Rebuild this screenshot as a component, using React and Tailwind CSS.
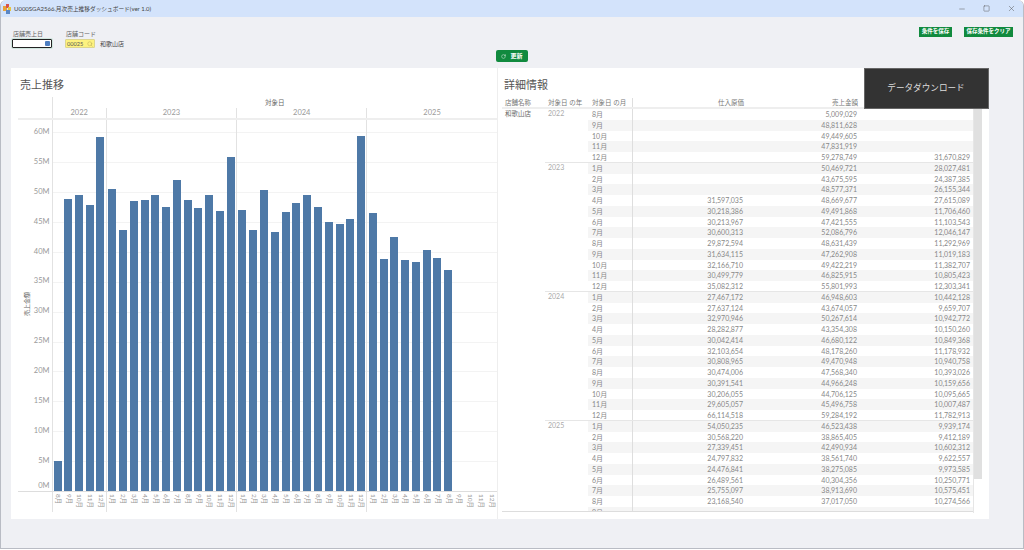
import { Minus, RotateCw, Search, Square, X } from "lucide-react";

const MONTH_HEIGHT = 5.98; // px per 1M on the chart

const years = [
  {
    year: "2022",
    months: [8, 9, 10, 11, 12],
    cost: ["", "", "", "", ""],
    sales: ["5,009,029", "48,811,628", "49,449,605", "47,831,919", "59,278,749"],
    third: ["", "", "", "", "31,670,829"],
  },
  {
    year: "2023",
    months: [1, 2, 3, 4, 5, 6, 7, 8, 9, 10, 11, 12],
    cost: ["", "", "", "31,597,035", "30,218,386", "30,213,967", "30,600,313", "29,872,594", "31,634,115", "32,166,710", "30,499,779", "35,082,312"],
    sales: ["50,469,721", "43,675,595", "48,577,371", "48,669,677", "49,491,868", "47,421,555", "52,086,796", "48,631,439", "47,262,908", "49,422,219", "46,825,915", "55,801,993"],
    third: ["28,027,481", "24,387,385", "26,155,344", "27,615,089", "11,706,460", "11,103,543", "12,046,147", "11,292,969", "11,019,183", "11,382,707", "10,805,423", "12,303,341"],
  },
  {
    year: "2024",
    months: [1, 2, 3, 4, 5, 6, 7, 8, 9, 10, 11, 12],
    cost: ["27,467,172", "27,637,124", "32,970,946", "28,282,877", "30,042,414", "32,103,654", "30,808,965", "30,474,006", "30,391,541", "30,206,055", "29,605,057", "66,114,518"],
    sales: ["46,948,603", "43,674,057", "50,267,614", "43,354,308", "46,680,122", "48,178,260", "49,470,948", "47,568,340", "44,966,248", "44,706,125", "45,496,758", "59,284,192"],
    third: ["10,442,128", "9,659,707", "10,942,772", "10,150,260", "10,849,368", "11,178,932", "10,940,758", "10,393,026", "10,159,656", "10,095,665", "10,007,487", "11,782,913"],
  },
  {
    year: "2025",
    months: [1, 2, 3, 4, 5, 6, 7, 8, 9, 10, 11, 12],
    cost: ["54,050,235", "30,568,220", "27,339,451", "24,797,832", "24,476,841", "26,489,561", "25,755,097", "23,168,540", "", "", "", ""],
    sales: ["46,523,438", "38,865,405", "42,490,934", "38,561,740", "38,275,085", "40,304,356", "38,913,690", "37,017,050", "", "", "", ""],
    third: ["9,939,174", "9,412,189", "10,602,312", "9,622,557", "9,973,585", "10,250,771", "10,575,451", "10,274,566", "", "", "", ""],
  },
];

const ticks = ["60M", "55M", "50M", "45M", "40M", "35M", "30M", "25M", "20M", "15M", "10M", "5M"];

const yearWidth = { 5: "w-[54.3px]", 12: "w-[130.3px]" };

function AppIcon() {
  return (
    <svg width="9" height="10" viewBox="0 0 9 10" className="shrink-0">
      <rect x="0" y="2" width="4" height="5" fill="#e8a23a" />
      <rect x="3" y="0" width="3" height="4" fill="#d9534a" />
      <rect x="5" y="3" width="3" height="4" fill="#e6c53f" />
      <rect x="3" y="6" width="4" height="4" fill="#5b86c4" />
    </svg>
  );
}

function TitleBar() {
  return (
    <div className="h-[17px] shrink-0 bg-[#d3e3fb] flex items-center pl-[2px] rounded-t-[6px]">
      <AppIcon />
      <span className="ml-[2px] text-[#444] text-[6px]">
        U000SGA2566.<span className="text-[5.7px]">月次売上推移ダッシュボード</span>(ver 1.0)
      </span>
      <div className="ml-auto flex items-center text-[#555]">
        <Minus size={8} strokeWidth={1.5} className="mr-[17px]" />
        <Square size={7} strokeWidth={1.6} className="mr-[17px]" />
        <X size={9} strokeWidth={1.3} className="mr-[7px]" />
      </div>
    </div>
  );
}

function Filters() {
  return (
    <div className="h-[51px] shrink-0 flex flex-col">
      <div className="h-[33px] flex justify-between">
        <div className="flex pl-[11px] pt-[12px]">
          <div className="w-[53px]">
            <div className="pl-[1px] h-[10px] leading-[9px] text-[6px] text-[#666]">店舗売上日</div>
            <div className="w-[40px] h-[9px] bg-white border-[1.5px] border-[#222] rounded-[1px] flex items-center justify-end pr-[1px] shadow-[0_0_0_1px_#cfe6de]">
              <span className="w-[5px] h-[5px] bg-[#4e7fc0] rounded-[1px]" />
            </div>
          </div>
          <div>
            <div className="pl-[1px] h-[10px] leading-[9px] text-[6px] text-[#666]">店舗コード</div>
            <div className="flex items-center">
              <div className="w-[30px] h-[9px] bg-[#fdf27f] border border-[#dcd68f] rounded-[1px] flex items-center justify-between pl-[1px] pr-[1px]">
                <span className="text-[5.6px] leading-none text-[#555]">00025</span>
                <Search size={6} strokeWidth={1.5} className="text-[#a89a50]" />
              </div>
              <span className="ml-[5px] text-[6px] leading-none text-[#444]">和歌山店</span>
            </div>
          </div>
        </div>
        <div className="flex pt-[10px] pr-[10px] gap-[12px]">
          <button className="w-[33px] h-[10px] bg-[#118a3e] text-white text-[5.5px] leading-none font-bold">条件を保存</button>
          <button className="w-[49px] h-[10px] bg-[#118a3e] text-white text-[5.5px] leading-none font-bold">保存条件をクリア</button>
        </div>
      </div>
      <div className="flex justify-center">
        <button className="w-[32px] h-[12px] bg-[#118a3e] rounded-[2px] text-white flex items-center justify-center gap-[4px]">
          <RotateCw size={5} strokeWidth={2} />
          <span className="text-[6px] leading-none font-bold">更新</span>
        </button>
      </div>
    </div>
  );
}

function YAxis() {
  return (
    <div className="w-[33.5px] shrink-0 flex flex-col">
      <div className="h-[23px] shrink-0 border-b-2 border-[#eeeeee]" />
      <div className="h-[371px] relative pt-[7px] pr-[2px] text-right text-[7.5px] text-[#999]">
        {ticks.map((t) => (
          <div key={t} className="h-[29.9px] leading-[10px]">{t}</div>
        ))}
        <div className="-mt-[5px] leading-[10px]">0M</div>
        <span className="absolute left-[6px] top-[172px] [writing-mode:vertical-rl] [text-orientation:sideways] rotate-180 text-[6px] leading-none text-[#666]">売上金額</span>
      </div>
      <div className="border-t border-[#dddddd]" />
    </div>
  );
}

function Bars({ group }) {
  return (
    <div className={`${yearWidth[group.months.length]} shrink-0 h-full flex items-end border-l border-[#e2e2e2]`}>
      {group.months.map((m, i) => {
        const value = group.sales[i] ? Number(group.sales[i].replaceAll(",", "")) / 1000000 : 0;
        return (
          <div key={m} className="flex-1 flex justify-center">
            <div className="w-[8px] bg-[#4e79a7]" style={{ height: value * MONTH_HEIGHT }} />
          </div>
        );
      })}
    </div>
  );
}

function Chart() {
  return (
    <div className="w-[486px] shrink-0 pl-[7px] flex flex-col">
      <h2 className="h-[29px] shrink-0 pl-[2px] pt-[9px] text-[11px] leading-[16px] text-[#555]">売上推移</h2>
      <div className="flex">
        <YAxis />
        <div className="w-[445.5px] flex flex-col">
          <div className="h-[11px] leading-[12px] border-l border-[#e2e2e2] text-center text-[6.5px] text-[#666]">対象日</div>
          <div className="h-[12px] flex border-b-2 border-[#eeeeee]">
            {years.map((g) => (
              <div key={g.year} className={`${yearWidth[g.months.length]} shrink-0 border-l border-[#e2e2e2] text-center text-[7.5px] leading-[10px] text-[#999]`}>
                {g.year}
              </div>
            ))}
          </div>
          <div className="h-[371px] grid">
            <div className="col-start-1 row-start-1 pt-[12.3px]">
              {ticks.map((t) => (
                <div key={t} className="h-[29.9px] border-t border-[#f3f3f3]" />
              ))}
            </div>
            <div className="col-start-1 row-start-1 flex">
              {years.map((g) => (
                <Bars key={g.year} group={g} />
              ))}
            </div>
          </div>
          <div className="h-[21px] flex border-t border-[#dddddd]">
            {years.map((g) => (
              <div key={g.year} className={`${yearWidth[g.months.length]} shrink-0 flex border-l border-[#e2e2e2]`}>
                {g.months.map((m) => (
                  <div key={m} className="flex-1 flex justify-center pt-[2px]">
                    <span className="[writing-mode:vertical-rl] [text-orientation:sideways] text-[6.5px] leading-none text-[#999]">{m}月</span>
                  </div>
                ))}
              </div>
            ))}
          </div>
        </div>
      </div>
    </div>
  );
}

function TableRow({ group, index, rowIndex }) {
  const striped = rowIndex % 2 === 1;
  const last = index === group.months.length - 1;
  return (
    <div className={`h-[10.75px] flex leading-[11px] ${striped ? "bg-[#f5f5f5]" : "bg-white"} ${last ? "border-b border-[#e6e6e6]" : ""}`}>
      <div className="w-[44px] shrink-0 pl-[4px] text-[#888]">{group.months[index]}月</div>
      <div className="w-[114px] shrink-0 pr-[3px] text-right border-l border-[#dedede]">{group.cost[index]}</div>
      <div className="w-[114px] shrink-0 pr-[3px] text-right">{group.sales[index]}</div>
      <div className="flex-1 pr-[3px] text-right">{group.third[index]}</div>
    </div>
  );
}

function DetailTable() {
  let rowIndex = 0;
  // 2025 stops at the clipped 9月 row
  const groups = years.map((g) => (g.year === "2025" ? { ...g, months: g.months.slice(0, 9) } : g));
  return (
    <div className="flex-1 flex flex-col border-l border-[#eeeeee]">
      <h2 className="h-[29px] shrink-0 pl-[6px] pt-[9px] text-[11px] leading-[16px] text-[#555]">詳細情報</h2>
      <div className="flex pl-[4px]">
        <div className="w-[471px] shrink-0 h-[415px] overflow-hidden border-b border-[#dddddd] text-[7px] text-[#888]">
          <div className="h-[12px] flex items-center pt-[1px] border-b-2 border-[#eeeeee] text-[6.5px] text-[#777]">
            <div className="w-[43px] shrink-0 pl-[3px]">店舗名称</div>
            <div className="w-[43px] shrink-0 pl-[3px]">対象日 の年</div>
            <div className="w-[44px] shrink-0 pl-[4px] h-full flex items-center">対象日 の月</div>
            <div className="w-[115px] shrink-0 pr-[3px] text-right h-full flex items-center justify-end border-l border-[#dedede]">仕入原価</div>
            <div className="w-[114px] shrink-0 pr-[3px] text-right">売上金額</div>
          </div>
          <div className="flex">
            <div className="w-[43px] shrink-0 pl-[3px] leading-[9px] text-[6.5px] text-[#666]">和歌山店</div>
            <div className="flex-1">
              {groups.map((g) => (
                <div key={g.year} className="flex">
                  <div className={`w-[43px] shrink-0 pl-[3px] text-[#aaa] leading-[9px] ${g.year === "2025" ? "" : "border-b border-[#e6e6e6]"}`}>{g.year}</div>
                  <div className="flex-1">
                    {g.months.map((m, i) => (
                      <TableRow key={m} group={g} index={i} rowIndex={rowIndex++} />
                    ))}
                  </div>
                </div>
              ))}
            </div>
          </div>
        </div>
        <div className="w-[9px] shrink-0 h-[416px] border-l border-[#e6e6e6] flex flex-col">
          <div className="h-[382px] bg-[#e0e0e0]" />
        </div>
      </div>
    </div>
  );
}

export default function App() {
  return (
    <div className="w-[1024px] h-[550px] overflow-hidden bg-white font-['Lato','Noto_Sans_CJK_JP',sans-serif]">
      <div className="h-[549px] flex flex-col bg-[#eff0f4] border-x border-b border-[#b9bcc4] rounded-t-[6px]">
        <TitleBar />
        <Filters />
        <div className="relative ml-[10px] w-[978px] h-[451px] bg-white flex">
          <Chart />
          <DetailTable />
          <button className="absolute top-0 right-[0.5px] w-[125px] h-[41px] bg-[#333333] border border-[#666] text-[8.6px] text-[#dddddd]">
            データダウンロード
          </button>
        </div>
      </div>
    </div>
  );
}
